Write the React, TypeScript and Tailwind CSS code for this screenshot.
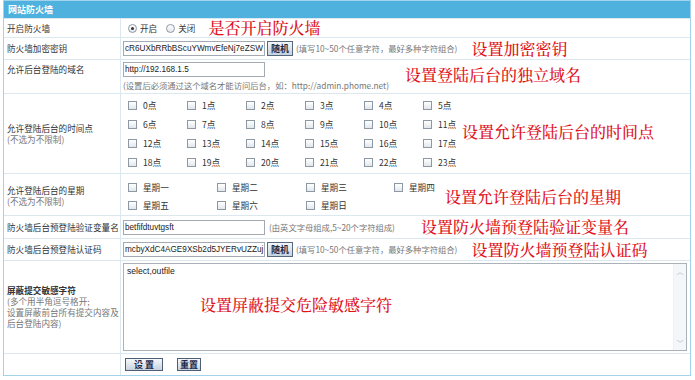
import React from 'react'

const hours = Array.from({ length: 24 }, (_, i) => `${i}点`)
const weeks = ['星期一', '星期二', '星期三', '星期四', '星期五', '星期六', '星期日']

function Box() {
  return <span className="inline-block h-[9px] w-[9px] shrink-0 border border-[#8d98a3] bg-gradient-to-b from-white to-[#e2e7ec]" />
}

function Check({ label }: { label: string }) {
  return (
    <div className="flex items-center gap-[6px] whitespace-nowrap">
      <Box />
      <span>{label}</span>
    </div>
  )
}

function Radio({ label, checked }: { label: string; checked?: boolean }) {
  return (
    <div className="flex items-center gap-[3px]">
      <span className="flex h-[9px] w-[9px] items-center justify-center rounded-full border border-[#8d98a3] bg-gradient-to-b from-white to-[#e2e7ec]">
        {checked && <span className="h-[3px] w-[3px] rounded-full bg-[#333]" />}
      </span>
      <span>{label}</span>
    </div>
  )
}

function Note({ children, className = '' }: { children: React.ReactNode; className?: string }) {
  return (
    <span className={`whitespace-nowrap font-['Noto_Serif_CJK_SC','Noto_Sans_CJK_SC',serif] text-[16px] font-medium leading-none text-[#e0121a] ${className}`}>
      {children}
    </span>
  )
}

function Field({ value }: { value: string }) {
  return (
    <div className="flex h-[15px] w-[142px] shrink-0 items-center overflow-hidden whitespace-nowrap border border-[#a3aab3] bg-white px-[1px] font-['Liberation_Sans',sans-serif] text-[8.2px] text-[#222]">
      {value}
    </div>
  )
}

function RandomBtn() {
  return (
    <span className="ml-[2px] flex h-[15px] w-[26px] shrink-0 items-center justify-center border border-[#56687d] bg-gradient-to-b from-[#f5f7fa] to-[#c6d2df] text-[9px] font-bold text-[#1c2a4a]">
      随机
    </span>
  )
}

function Hint({ children, className = '' }: { children: React.ReactNode; className?: string }) {
  return <span className={`whitespace-nowrap text-[8.3px] text-[#777] ${className}`}>{children}</span>
}

function Row({ h, label, children }: { h: string; label: React.ReactNode; children: React.ReactNode }) {
  return (
    <div className={`flex border-t border-[#dbe8ef] ${h}`}>
      <div className="flex w-[117px] shrink-0 items-center border-r border-[#dbe8ef] pl-[3px]">{label}</div>
      <div className="flex min-w-0 flex-1 items-center pl-[2px]">{children}</div>
    </div>
  )
}

export default function App() {
  return (
    <div className="min-h-screen bg-white font-['Noto_Sans_CJK_SC','Noto_Sans',sans-serif] text-[8.6px] leading-[11px] text-[#333]">
      <div className="ml-[3px] w-[688px] border border-[#a3d3ea]">
        {/* header */}
        <div className="flex h-[17px] items-center bg-[#4fb1dd] pl-[4px] text-[9px] font-bold text-white">网站防火墙</div>

        <Row h="h-[19px]" label="开启防火墙">
          <div className="ml-[5px] flex items-center gap-[9px]">
            <Radio label="开启" checked />
            <Radio label="关闭" />
          </div>
          <Note className="ml-[13px]">是否开启防火墙</Note>
        </Row>

        <Row h="h-[22px]" label="防火墙加密密钥">
          <Field value="cR6UXbRRbBScuYWmvEfeNj7eZSW" />
          <RandomBtn />
          <Hint className="ml-[3px]">(填写10~50个任意字符，最好多种字符组合)</Hint>
          <Note className="ml-[14px]">设置加密密钥</Note>
        </Row>

        <Row h="h-[34px]" label={<span className="self-start pt-[4px]">允许后台登陆的域名</span>}>
          <div className="flex flex-col gap-[3px]">
            <Field value="http://192.168.1.5" />
            <Hint>(设置后必须通过这个域名才能访问后台，如：http://admin.phome.net)</Hint>
          </div>
          <Note className="ml-[16px] -mt-[4px]">设置登陆后台的独立域名</Note>
        </Row>

        <Row
          h="h-[80px]"
          label={
            <div>
              <div>允许登陆后台的时间点</div>
              <div className="text-[#777]">(不选为不限制)</div>
            </div>
          }
        >
          <div className="ml-[5px] grid grid-cols-[repeat(5,59px)_36px] auto-rows-[19px] items-center">
            {hours.map((h) => (
              <Check key={h} label={h} />
            ))}
          </div>
          <Note className="ml-[3px] -mt-[4px]">设置允许登陆后台的时间点</Note>
        </Row>

        <Row
          h="h-[42px]"
          label={
            <div className="pt-[3px]">
              <div>允许登陆后台的星期</div>
              <div className="text-[#777]">(不选为不限制)</div>
            </div>
          }
        >
          <div className="ml-[5px] grid grid-cols-[89px_89px_88px_49px] auto-rows-[18px] items-center pt-[3px]">
            {weeks.map((w) => (
              <Check key={w} label={w} />
            ))}
          </div>
          <Note className="ml-[2px] mt-[4px]">设置允许登陆后台的星期</Note>
        </Row>

        <Row h="h-[23px]" label="防火墙后台预登陆验证变量名">
          <Field value="betfifdtuvtgsft" />
          <Hint className="ml-[4px]">(由英文字母组成,5~20个字符组成)</Hint>
          <Note className="ml-[26px]">设置防火墙预登陆验证变量名</Note>
        </Row>

        <Row h="h-[22px]" label="防火墙后台预登陆认证码">
          <Field value="mcbyXdC4AGE9XSb2d5JYERvUZZuj" />
          <RandomBtn />
          <Hint className="ml-[3px]">(填写10~50个任意字符，最好多种字符组合)</Hint>
          <Note className="ml-[14px]">设置防火墙预登陆认证码</Note>
        </Row>

        {/* sensitive characters */}
        <div className="flex h-[93px] border-t border-[#dbe8ef]">
          <div className="flex w-[117px] shrink-0 items-center border-r border-[#dbe8ef] pl-[3px] leading-[11px]">
            <div>
              <div className="font-bold">屏蔽提交敏感字符</div>
              <div className="text-[#777]">(多个用半角逗号格开;</div>
              <div className="text-[#777]">设置屏蔽前台所有提交内容及</div>
              <div className="text-[#777]">后台登陆内容)</div>
            </div>
          </div>
          <div className="flex-1 pl-[2px] pt-[2px]">
            <div className="relative flex h-[88px] w-[564px] border border-[#aab1b9] bg-white">
              <div className="flex-1 px-[3px] pt-[2px] font-['Liberation_Sans',sans-serif] text-[8.6px] text-[#222]">select,outfile</div>
              <div className="flex w-[13px] flex-col justify-between border-l border-[#eef2f6] bg-[#f4f7fa] py-[1px] text-[#a9b6c4]">
                <span className="flex h-[12px] items-center justify-center text-[7px]">︿</span>
                <span className="flex h-[12px] items-center justify-center text-[7px]">﹀</span>
              </div>
              <Note className="absolute left-[76px] top-[33px]">设置屏蔽提交危险敏感字符</Note>
            </div>
          </div>
        </div>

        {/* buttons */}
        <div className="flex h-[22px] border-t border-[#dbe8ef]">
          <div className="w-[117px] shrink-0 border-r border-[#dbe8ef]" />
          <div className="flex flex-1 items-center gap-[14px] pl-[4px]">
            <span className="flex h-[13px] w-[38px] items-center justify-center border border-[#4f5f73] bg-gradient-to-b from-[#f5f8fb] to-[#c7d3e0] text-[9px] font-bold text-[#1c2a4a]">
              设 置
            </span>
            <span className="flex h-[13px] w-[24px] items-center justify-center border border-[#4f5f73] bg-gradient-to-b from-[#f5f8fb] to-[#c7d3e0] text-[9px] font-bold text-[#1c2a4a]">
              重置
            </span>
          </div>
        </div>
      </div>
    </div>
  )
}
